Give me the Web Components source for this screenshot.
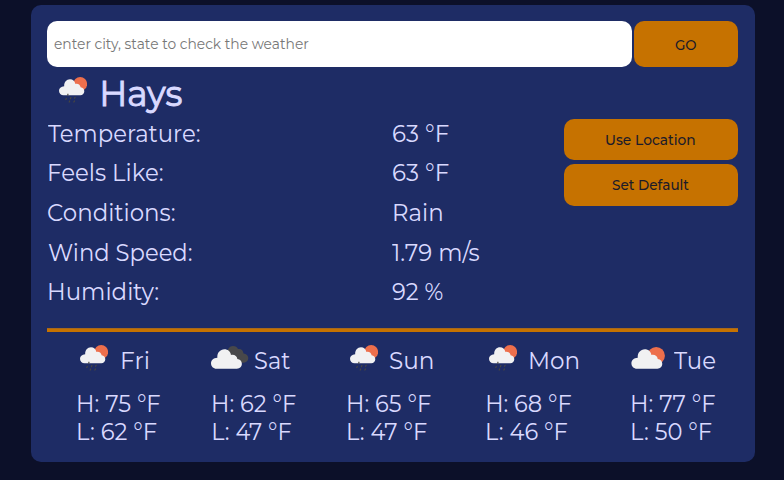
<!DOCTYPE html>
<html lang="en"><head><meta charset="utf-8"><title>Weather</title>
<style>
html,body{margin:0;height:100%;overflow:hidden;background:#0c1029;font-family:Montserrat,Inter,"Liberation Sans",sans-serif;color:#d9d9ff}
</style></head><body><weather-app></weather-app>
<script>
const ctx=document.createElement('canvas').getContext('2d');
// One line of text whose visible ink spans exactly the `w` pixels of its box.
class FitText extends HTMLElement{
  connectedCallback(){
    const w=+this.getAttribute('w');
    this.attachShadow({mode:'open'}).innerHTML=`<style>:host{display:inline-block;flex:none;width:${w}px;white-space:pre}span{display:inline-block;transform-origin:0 50%}</style><span><slot></slot></span>`;
    const s=this.shadowRoot.querySelector('span'),c=getComputedStyle(s);
    ctx.font=`${c.fontWeight} ${c.fontSize} ${c.fontFamily}`;
    const m=ctx.measureText(this.textContent);
    const k=w/(m.actualBoundingBoxLeft+m.actualBoundingBoxRight);
    s.style.transform=`translateX(${m.actualBoundingBoxLeft*k}px) scaleX(${k})`;
  }
}
const cloud='<path fill="#f1f1f2" d="M4.6 18.2C1.900 18.2 0 16.200 0 13.700C0 11.200 1.900 9.400 5.200 9.200C4.900 5.200 7.500 2.300 11 2.300C13.800 2.300 15.800 4 16.400 6.900C19.200 6.300 21.400 8 21.600 10.300C23.900 10.500 25.300 12 25.300 14.200C25.300 16.500 23.700 18.200 21.300 18.200Z"/>';
const icons={
 rain:[28,26,'<circle cx="21.2" cy="7" r="6.900" fill="#ed6f4c"/>'+cloud+'<g stroke="#494740" stroke-width="1.200" stroke-linecap="round"><path d="M9 17.200l-.3 1M7.300 21.500l-.5 1M11.900 20.600l-.5 1.200M16.100 20.300l-.5 1M10.700 24l-.5 1M15.400 24l-.5 1"/></g>'],
 cloudy:[38,24,'<path fill="#48484a" d="M16 8C16.200 3 18.500 0 22 0C24.500 0 26.200 1.300 27 3.100C30 2.300 32.300 4.500 32.500 7.400C35.500 7.600 37.300 9.500 37.300 12.100C37.300 14.900 35.300 16.700 32.700 16.700H24Z"/><g transform="translate(0 .5) scale(1.220)">'+cloud+'</g>'],
 sun:[35,23,'<circle cx="25.200" cy="8.700" r="8.700" fill="#ed6f4c"/><g transform="translate(.4 -.5) scale(1.220)">'+cloud+'</g>']};
class WeatherIcon extends HTMLElement{
  connectedCallback(){
    const [w,h,g]=icons[this.getAttribute('kind')];
    this.attachShadow({mode:'open'}).innerHTML=`<style>:host{display:block;flex:none}svg{display:block}</style><svg width="${w}" height="${h}" viewBox="0 0 ${w} ${h}">${g}</svg>`;
  }
}
class PillButton extends HTMLElement{
  connectedCallback(){
    this.attachShadow({mode:'open'}).innerHTML=`<style>:host{display:block}button{display:flex;width:100%;height:100%;align-items:center;justify-content:center;border:0;border-radius:10px;background:#c67200;color:#1c1b29;padding:1px 0 0;font:500 14.400px Montserrat,Inter,sans-serif}</style><button><slot></slot></button>`;
  }
}
class StatRow extends HTMLElement{
  connectedCallback(){
    const a=n=>this.getAttribute(n);
    this.attachShadow({mode:'open'}).innerHTML=`<style>:host{display:grid;grid-template-columns:345px 1fr;height:39.670px;line-height:39.670px;font-size:24px}.l{margin-left:${a('lx')}px}.v{margin-left:${a('vx')}px}</style><div><fit-text class="l" w="${a('lw')}">${a('label')}</fit-text></div><div><fit-text class="v" w="${a('vw')}">${a('value')}</fit-text></div>`;
  }
}
class DayForecast extends HTMLElement{
  connectedCallback(){
    const a=n=>this.getAttribute(n);
    this.attachShadow({mode:'open'}).innerHTML=`<style>:host{display:block;font-size:24px;line-height:28px}
    .top{display:flex;height:31px;line-height:32px;margin-left:${a('ix')}px;margin-bottom:13.700px}
    weather-icon{padding-top:${a('iy')}px;width:${a('iw')}px}
    .t{height:28px;padding-left:.5px}</style>
    <div class="top"><weather-icon kind="${a('icon')}"></weather-icon><fit-text w="${a('dw')}">${a('day')}</fit-text></div>
    <div class="t"><fit-text w="${a('hw')}">H: ${a('high')} °F</fit-text></div><div class="t"><fit-text w="${a('low-w')}">L: ${a('low')} °F</fit-text></div>`;
  }
}
class WeatherApp extends HTMLElement{
  connectedCallback(){
    this.attachShadow({mode:'open'}).innerHTML=`<style>
    :host{display:block;height:480px;padding:5px 0 0 30.500px;box-sizing:border-box}
    main{box-sizing:border-box;width:724.500px;height:457.300px;border-radius:10px;background:#1e2c65;padding:16.300px 17.500px 0 16.500px}
    .search{display:flex;gap:2.500px;height:45.700px}
    .box{flex:1;display:flex;align-items:center;border-radius:10px;background:#fff;color:#777;font-size:14.400px;padding-left:7px}
    .go{width:103.500px}
    h1{display:flex;gap:15.500px;margin:0;padding-left:12px;height:46.700px;font-size:36.500px;font-weight:400;line-height:53px;-webkit-text-stroke:1px #d9d9ff}
    h1 weather-icon{padding-top:10.500px}
    .now{display:flex;height:214.300px}
    .stats{flex:1}
    .actions{width:173.500px;display:flex;flex-direction:column;gap:4px;padding-top:5.300px}
    .actions pill-button{height:41.300px}
    hr{height:4px;margin:0;border:0;background:linear-gradient(#a8681b 0 1px,#c67200 1px)}
    .days{display:grid;grid-template-columns:135px 135px 139px 145.500px 1fr;padding:13px 0 0 30px}
    </style><main>
    <div class="search"><div class="box" role="textbox"><fit-text w="255">enter city, state to check the weather</fit-text></div><pill-button class="go"><fit-text w="21.500">GO</fit-text></pill-button></div>
    <h1><weather-icon kind="rain"></weather-icon><fit-text w="78.500">Hays</fit-text></h1>
    <div class="now"><div class="stats">
    <stat-row label="Temperature:" value="63 °F" lx=".5" lw="151.500" vx=".5" vw="56"></stat-row>
    <stat-row label="Feels Like:" value="63 °F" lx="1.700" lw="113.500" vx=".5" vw="56"></stat-row>
    <stat-row label="Conditions:" value="Rain" lx=".7" lw="126.500" vx="1.700" vw="47.500"></stat-row>
    <stat-row label="Wind Speed:" value="1.79 m/s" lx=".5" lw="143.500" vx=".2" vw="87"></stat-row>
    <stat-row label="Humidity:" value="92 %" lx="1.700" lw="109" vx=".3" vw="50.500"></stat-row></div>
    <div class="actions"><pill-button><fit-text w="89">Use Location</fit-text></pill-button><pill-button><fit-text w="77">Set Default</fit-text></pill-button></div></div>
    <hr><div class="days">
    <day-forecast icon="rain" ix="3" iy="0" iw="41.500" day="Fri" dw="26.500" high="75" hw="82.500" low="62" low-w="79"></day-forecast>
    <day-forecast icon="cloudy" ix="-1" iy="1" iw="44" day="Sat" dw="35.500" high="62" hw="83" low="47" low-w="78.500"></day-forecast>
    <day-forecast icon="rain" ix="2.700" iy="0" iw="40.300" day="Sun" dw="42.300" high="65" hw="83" low="47" low-w="79"></day-forecast>
    <day-forecast icon="rain" ix="2.700" iy="0" iw="41.200" day="Mon" dw="48" high="68" hw="84.500" low="46" low-w="80.500"></day-forecast>
    <day-forecast icon="sun" ix="-.5" iy="2" iw="42.700" day="Tue" dw="41.500" high="77" hw="83.500" low="50" low-w="80"></day-forecast>
    </div></main>`;
  }
}
customElements.define('fit-text',FitText);
customElements.define('weather-icon',WeatherIcon);
customElements.define('pill-button',PillButton);
customElements.define('stat-row',StatRow);
customElements.define('day-forecast',DayForecast);
customElements.define('weather-app',WeatherApp);
</script></body></html>
